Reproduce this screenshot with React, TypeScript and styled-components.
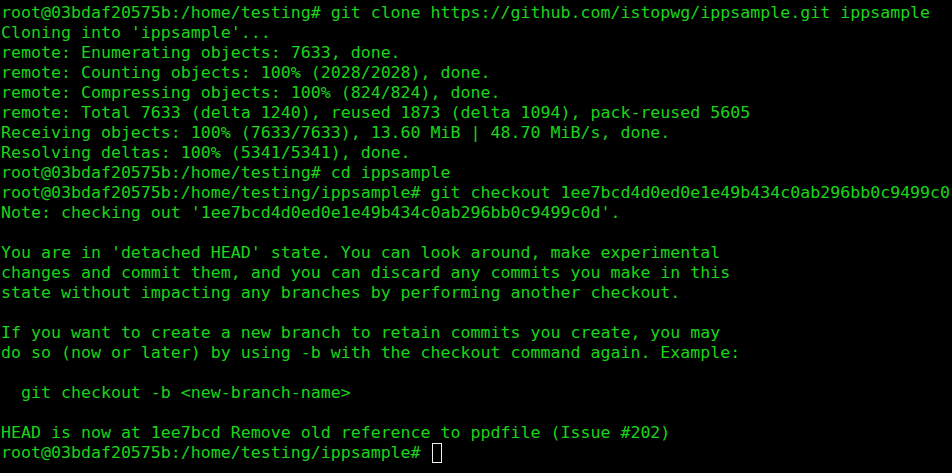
import React from "react";
import styled, { createGlobalStyle } from "styled-components";

const Global = createGlobalStyle`
  html, body { margin: 0; padding: 0; background: #000; }
  body { width: 952px; height: 473px; overflow: hidden; }
`;

const Terminal = styled.div`
  width: 952px;
  height: 473px;
  box-sizing: border-box;
  padding: 3px 0 0 1px;
  background: #000;
  color: #1ad41a;
  font-family: "DejaVu Sans Mono", "Liberation Mono", monospace;
  font-size: 16.6px;
  line-height: 20px;
  overflow: hidden;
  display: flex;
  flex-direction: column;
`;

const Line = styled.div`
  height: 20px;
  white-space: pre;
  overflow: hidden;
`;

const Cursor = styled.span`
  display: inline-block;
  width: 8px;
  height: 18px;
  border: 1.5px solid #f2f2f2;
  vertical-align: -5px;
  margin-left: 1px;
`;

const lines = [
  "root@03bdaf20575b:/home/testing# git clone https://github.com/istopwg/ippsample.git ippsample",
  "Cloning into 'ippsample'...",
  "remote: Enumerating objects: 7633, done.",
  "remote: Counting objects: 100% (2028/2028), done.",
  "remote: Compressing objects: 100% (824/824), done.",
  "remote: Total 7633 (delta 1240), reused 1873 (delta 1094), pack-reused 5605",
  "Receiving objects: 100% (7633/7633), 13.60 MiB | 48.70 MiB/s, done.",
  "Resolving deltas: 100% (5341/5341), done.",
  "root@03bdaf20575b:/home/testing# cd ippsample",
  "root@03bdaf20575b:/home/testing/ippsample# git checkout 1ee7bcd4d0ed0e1e49b434c0ab296bb0c9499c0",
  "Note: checking out '1ee7bcd4d0ed0e1e49b434c0ab296bb0c9499c0d'.",
  "",
  "You are in 'detached HEAD' state. You can look around, make experimental",
  "changes and commit them, and you can discard any commits you make in this",
  "state without impacting any branches by performing another checkout.",
  "",
  "If you want to create a new branch to retain commits you create, you may",
  "do so (now or later) by using -b with the checkout command again. Example:",
  "",
  "  git checkout -b <new-branch-name>",
  "",
  "HEAD is now at 1ee7bcd Remove old reference to ppdfile (Issue #202)",
];

export default function App() {
  return (
    <>
      <Global />
      <Terminal>
        {lines.map((l, i) => (
          <Line key={i}>{l}</Line>
        ))}
        <Line>
          {"root@03bdaf20575b:/home/testing/ippsample# "}
          <Cursor />
        </Line>
      </Terminal>
    </>
  );
}
